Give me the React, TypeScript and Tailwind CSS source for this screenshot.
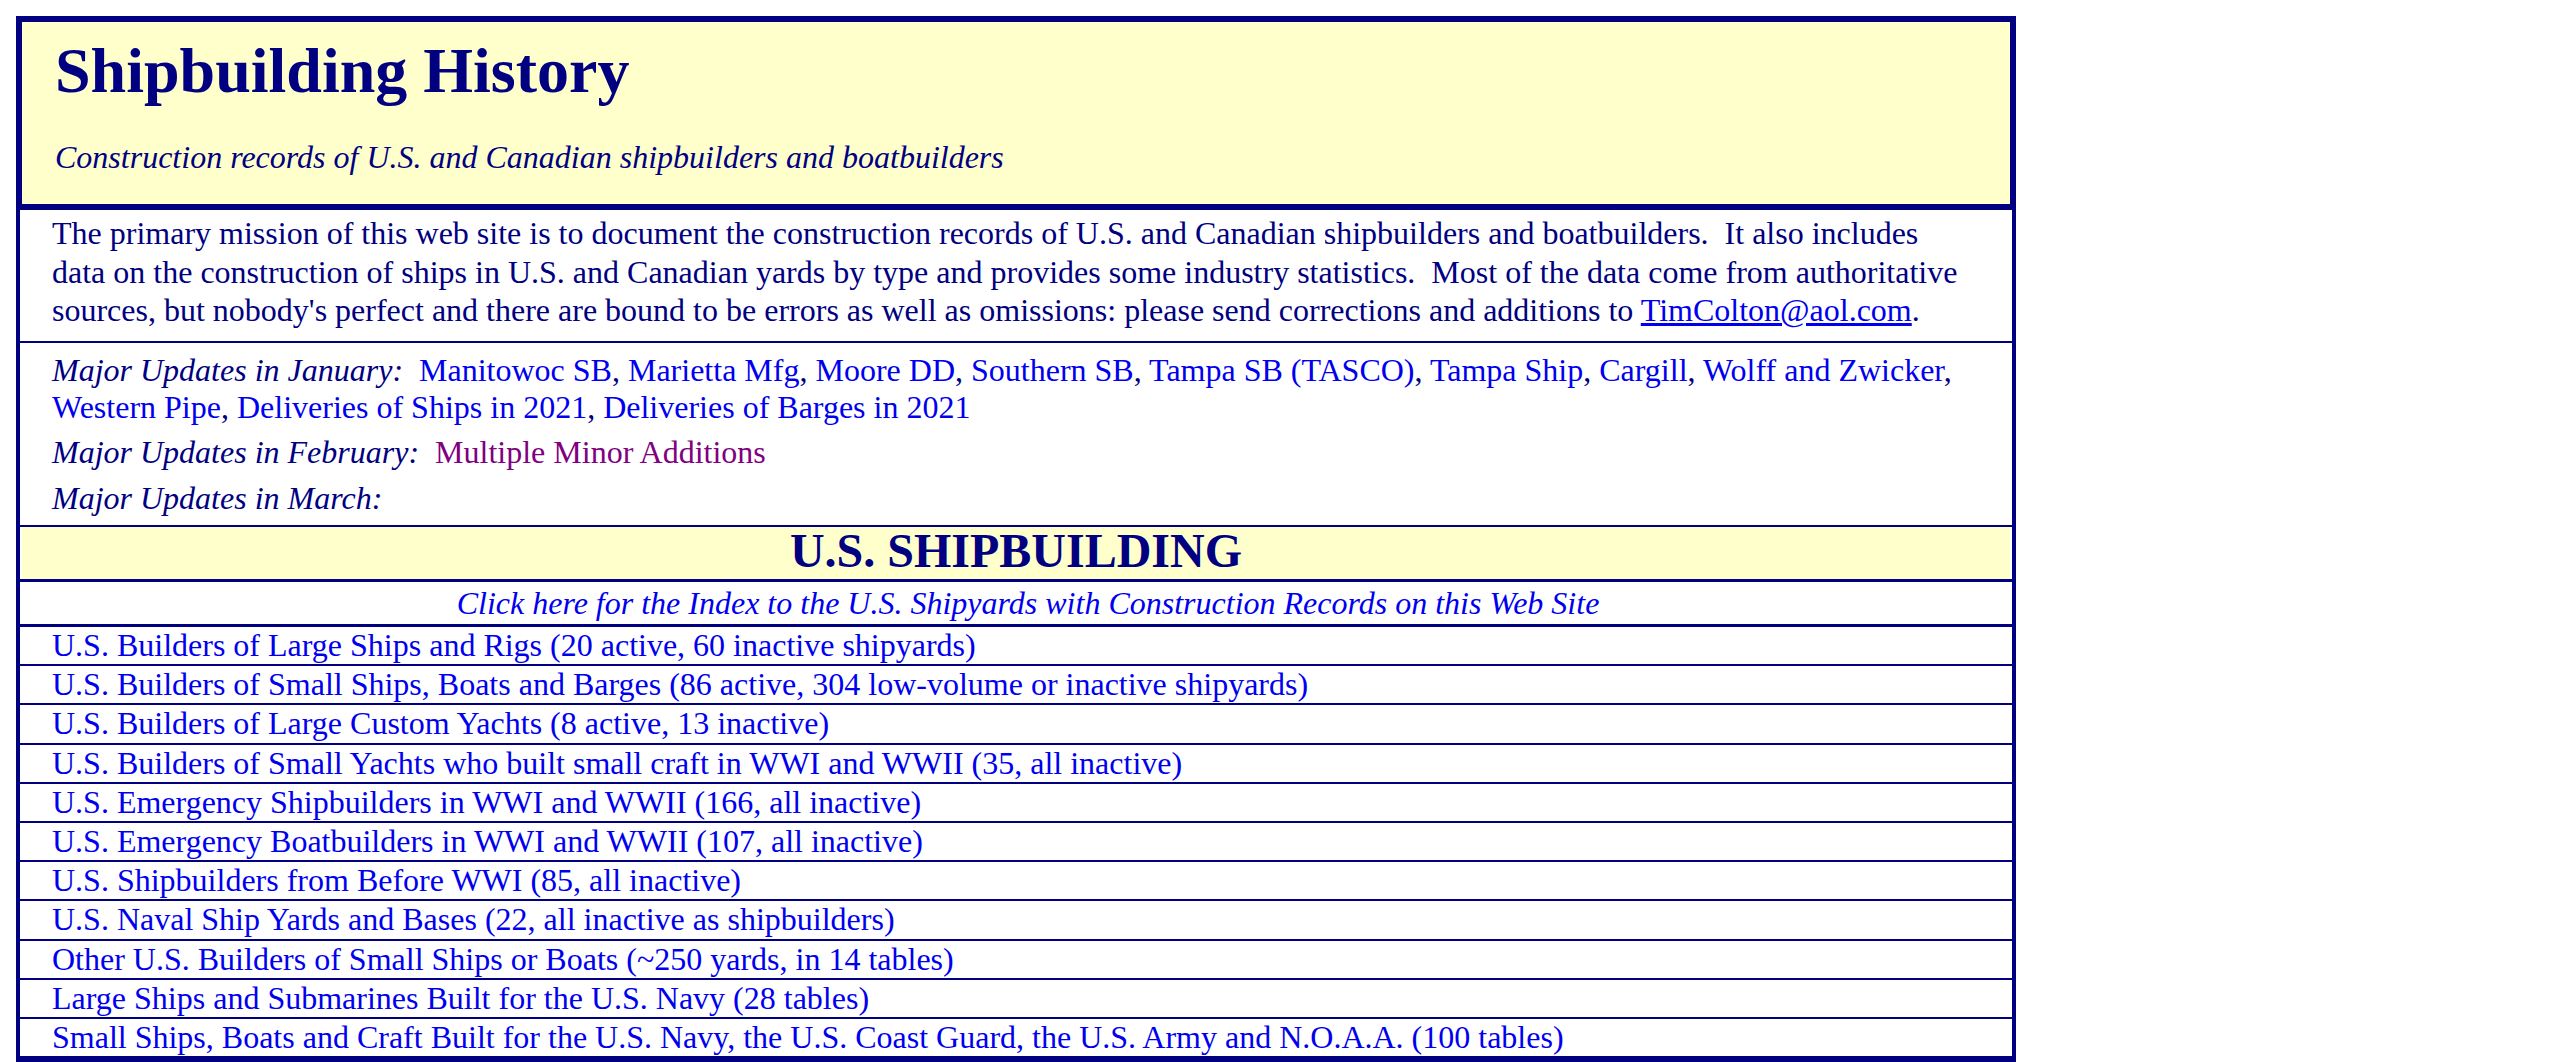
import React from "react";

const rows = [
  "U.S. Builders of Large Ships and Rigs (20 active, 60 inactive shipyards)",
  "U.S. Builders of Small Ships, Boats and Barges (86 active, 304 low-volume or inactive shipyards)",
  "U.S. Builders of Large Custom Yachts (8 active, 13 inactive)",
  "U.S. Builders of Small Yachts who built small craft in WWI and WWII (35, all inactive)",
  "U.S. Emergency Shipbuilders in WWI and WWII (166, all inactive)",
  "U.S. Emergency Boatbuilders in WWI and WWII (107, all inactive)",
  "U.S. Shipbuilders from Before WWI (85, all inactive)",
  "U.S. Naval Ship Yards and Bases (22, all inactive as shipbuilders)",
  "Other U.S. Builders of Small Ships or Boats (~250 yards, in 14 tables)",
  "Large Ships and Submarines Built for the U.S. Navy (28 tables)",
  "Small Ships, Boats and Craft Built for the U.S. Navy, the U.S. Coast Guard, the U.S. Army and N.O.A.A. (100 tables)",
];

const jan = [
  "Manitowoc SB",
  "Marietta Mfg",
  "Moore DD",
  "Southern SB",
  "Tampa SB (TASCO)",
  "Tampa Ship",
  "Cargill",
  "Wolff and Zwicker",
];
const jan2 = ["Western Pipe", "Deliveries of Ships in 2021", "Deliveries of Barges in 2021"];

export default function App() {
  return (
    <div className="min-h-screen bg-white font-['Liberation_Serif','Times_New_Roman',serif] text-[32px] text-[#000080]">
      <div className="pt-[16px] pl-[16px] w-[2016px]">
        <div className="h-[194px] border-[6px] border-[#000080] bg-[#ffffcc] pl-[33px] pt-[12px]">
          <h1 className="text-[64px] font-bold leading-[74px]">Shipbuilding History</h1>
          <p className="mt-[31px] italic leading-[37px]">
            Construction records of U.S. and Canadian shipbuilders and boatbuilders
          </p>
        </div>
        <div className="border-x-[4px] border-b-[4px] border-[#000080]">
          <div className="h-[133px] border-b-[2px] border-[#000080] pl-[32px] pt-[4px] leading-[38.5px] whitespace-nowrap">
            The primary mission of this web site is to document the construction records of U.S. and Canadian shipbuilders and boatbuilders.{"\u00a0 "}It also includes
            <br />
            data on the construction of ships in U.S. and Canadian yards by type and provides some industry statistics.{"\u00a0 "}Most of the data come from authoritative
            <br />
            sources, but nobody's perfect and there are bound to be errors as well as omissions: please send corrections and additions to{" "}
            <a className="text-[#0000ee] underline" href="#">TimColton@aol.com</a>.
          </div>
          <div className="h-[184px] border-b-[2px] border-[#000080] pl-[32px] pt-[9px] leading-[37px] whitespace-nowrap">
            <div>
              <i>Major Updates in January:</i>
              {"\u00a0 "}
              {jan.map((t, i) => (
                <React.Fragment key={t}>
                  <a className="text-[#0000ee]" href="#">{t}</a>
                  {i < jan.length - 1 ? ", " : ","}
                </React.Fragment>
              ))}
              <br />
              {jan2.map((t, i) => (
                <React.Fragment key={t}>
                  <a className="text-[#0000ee]" href="#">{t}</a>
                  {i < jan2.length - 1 ? ", " : ""}
                </React.Fragment>
              ))}
            </div>
            <div className="mt-[8px]">
              <i>Major Updates in February:</i>
              {"\u00a0 "}
              <a className="text-[#800080]" href="#">Multiple Minor Additions</a>
            </div>
            <div className="mt-[9px]">
              <i>Major Updates in March:</i>
            </div>
          </div>
          <div className="h-[55px] border-b-[3px] border-[#000080] px-[2px]">
            <div className="h-full bg-[#ffffcc] text-center text-[48px] font-bold leading-[47px]">
              U.S. SHIPBUILDING
            </div>
          </div>
          <div className="h-[45px] border-b-[3px] border-[#000080] pl-[24px] text-center italic leading-[42px]">
            <a className="text-[#0000ee]" href="#">
              Click here for the Index to the U.S. Shipyards with Construction Records on this Web Site
            </a>
          </div>
          {rows.map((r) => (
            <div
              key={r}
              className="h-[39.2px] border-b-[2px] border-[#000080] pl-[32px] leading-[37.2px] whitespace-nowrap"
            >
              <a className="text-[#0000ee]" href="#">{r}</a>
            </div>
          ))}
        </div>
      </div>
    </div>
  );
}
